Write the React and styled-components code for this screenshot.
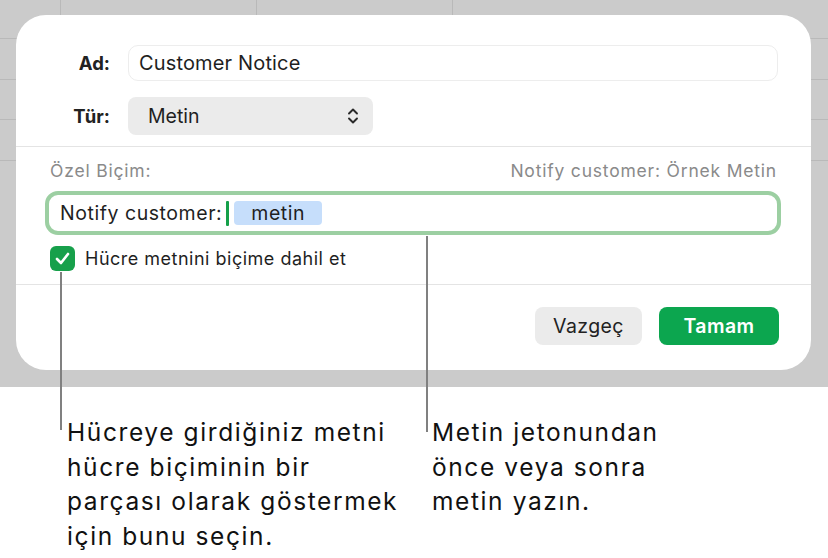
import styled, { createGlobalStyle } from 'styled-components';

const GlobalStyle = createGlobalStyle`
    body {
        margin: 0;
        background: #ffffff;
        font-family: Inter, "Noto Sans", sans-serif;
        color: #1f1f1f;
    }
`;

const line = '#b9b9b9';

const Page = styled.div`
    position: relative;
    width: 828px;
    height: 558px;
    overflow: hidden;
`;

// spreadsheet behind the dialog
const Backdrop = styled.div`
    height: 387px;
    box-sizing: border-box;
    padding: 15px 17px 17px 16px;
    background-color: #cbcbcb;
    background-image:
        linear-gradient(${line}, ${line}),
        linear-gradient(${line}, ${line}),
        linear-gradient(${line}, ${line}),
        linear-gradient(${line}, ${line}),
        linear-gradient(${line}, ${line}),
        linear-gradient(${line}, ${line}),
        linear-gradient(${line}, ${line});
    background-repeat: no-repeat;
    background-size: 1px 161px, 1px 161px, 1px 161px, 100% 1px, 100% 1px, 100% 1px, 100% 1px;
    background-position: 60px 0, 256px 0, 452px 0, 0 38px, 0 79px, 0 119px, 0 160px;
`;

const Dialog = styled.div`
    height: 355px;
    background: #ffffff;
    border-radius: 30px;
    display: flex;
    flex-direction: column;
`;

const FormGrid = styled.div`
    display: grid;
    grid-template-columns: 94px 1fr;
    column-gap: 18px;
    row-gap: 16px;
    padding: 30px 33px 11px 0;
    border-bottom: 1px solid #e4e4e4;
    align-items: center;
`;

const Label = styled.div`
    text-align: right;
    font-size: 18.5px;
    font-weight: 700;
    color: #222;
`;

const NameInput = styled.div`
    height: 36px;
    box-sizing: border-box;
    border: 1px solid #ededed;
    border-radius: 10px;
    padding-left: 10px;
    display: flex;
    align-items: center;
    font-size: 20px;
    letter-spacing: 0.15px;
`;

const Select = styled.div`
    width: 245px;
    height: 38px;
    box-sizing: border-box;
    background: #ebebeb;
    border-radius: 8px;
    padding: 0 14px 0 20px;
    display: flex;
    align-items: center;
    justify-content: space-between;
    font-size: 19.5px;
`;

const FormatSection = styled.div`
    padding: 14px 30px 13px 29px;
    border-bottom: 1px solid #e4e4e4;
    display: flex;
    flex-direction: column;
`;

const FormatHeader = styled.div`
    display: flex;
    justify-content: space-between;
    padding: 0 4px 0 5px;
    height: 20px;
    line-height: 20px;
    font-size: 17.5px;
    letter-spacing: 0.8px;
    color: #8a8a8a;
`;

const FormatField = styled.div`
    margin-top: 10px;
    height: 44px;
    box-sizing: border-box;
    border: 4px solid #9ccfa2;
    border-radius: 13px;
    padding-left: 11px;
    display: flex;
    align-items: center;
    font-size: 19.5px;
    letter-spacing: 0.55px;
`;

const Caret = styled.span`
    width: 3px;
    height: 25px;
    margin: 0 5px 0 4px;
    background: #15a04a;
    border-radius: 1px;
`;

const Token = styled.span`
    width: 88px;
    height: 24px;
    background: #c6defb;
    border-radius: 4px;
    display: flex;
    align-items: center;
    justify-content: center;
`;

const CheckRow = styled.label`
    margin-top: 11px;
    padding-left: 5px;
    display: flex;
    align-items: center;
    gap: 10px;
    font-size: 18px;
    letter-spacing: 0.5px;
`;

const CheckBox = styled.span`
    width: 25px;
    height: 25px;
    border-radius: 6px;
    background: #17a04b;
    display: flex;
    align-items: center;
    justify-content: center;
`;

const Footer = styled.div`
    flex: 1;
    display: flex;
    justify-content: flex-end;
    align-items: flex-start;
    gap: 17px;
    padding: 22px 32px 0 0;
`;

const Button = styled.button`
    height: 38px;
    width: ${p => p.$w}px;
    border: none;
    border-radius: 8px;
    font-family: inherit;
    font-size: 19.5px;
    letter-spacing: 0.4px;
    font-weight: ${p => (p.$primary ? 600 : 400)};
    background: ${p => (p.$primary ? '#0ca64f' : '#ebebeb')};
    color: ${p => (p.$primary ? '#ffffff' : '#222')};
`;

const Callouts = styled.div`
    display: flex;
    padding: 28px 0 0 67px;
`;

const Callout = styled.p`
    margin: 0;
    width: ${p => p.$w}px;
    font-size: 24.5px;
    line-height: 34.5px;
    letter-spacing: 1.6px;
    color: #111;
    white-space: nowrap;
`;

const Leader = styled.div`
    position: absolute;
    left: ${p => p.$x}px;
    top: ${p => p.$top}px;
    height: ${p => p.$h}px;
    width: 2px;
    background: #808080;
`;

const Chevrons = () => (
    <svg width="12" height="20" viewBox="0 0 12 20">
        <path d="M2 7.5 L6 3.5 L10 7.5" fill="none" stroke="#2a2a2a" strokeWidth="1.9" strokeLinecap="round" strokeLinejoin="round" />
        <path d="M2 12.5 L6 16.5 L10 12.5" fill="none" stroke="#2a2a2a" strokeWidth="1.9" strokeLinecap="round" strokeLinejoin="round" />
    </svg>
);

const Check = () => (
    <svg width="17" height="17" viewBox="0 0 17 17">
        <path d="M3 9 L7 13 L14 4" fill="none" stroke="#fff" strokeWidth="2.6" strokeLinecap="round" strokeLinejoin="round" />
    </svg>
);

export default function App() {
    return (
        <Page>
            <GlobalStyle />
            <Backdrop>
                <Dialog>
                    <FormGrid>
                        <Label>Ad:</Label>
                        <NameInput>Customer Notice</NameInput>
                        <Label>Tür:</Label>
                        <Select>
                            Metin
                            <Chevrons />
                        </Select>
                    </FormGrid>
                    <FormatSection>
                        <FormatHeader>
                            <span>Özel Biçim:</span>
                            <span>Notify customer: Örnek Metin</span>
                        </FormatHeader>
                        <FormatField>
                            Notify customer:
                            <Caret />
                            <Token>metin</Token>
                        </FormatField>
                        <CheckRow>
                            <CheckBox><Check /></CheckBox>
                            Hücre metnini biçime dahil et
                        </CheckRow>
                    </FormatSection>
                    <Footer>
                        <Button $w={107}>Vazgeç</Button>
                        <Button $w={120} $primary>Tamam</Button>
                    </Footer>
                </Dialog>
            </Backdrop>
            <Callouts>
                <Callout $w={365}>
                    Hücreye girdiğiniz metni<br />
                    hücre biçiminin bir<br />
                    parçası olarak göstermek<br />
                    için bunu seçin.
                </Callout>
                <Callout $w={300}>
                    Metin jetonundan<br />
                    önce veya sonra<br />
                    metin yazın.
                </Callout>
            </Callouts>
            <Leader $x={60} $top={272} $h={158} />
            <Leader $x={426} $top={236} $h={196} />
        </Page>
    );
}
